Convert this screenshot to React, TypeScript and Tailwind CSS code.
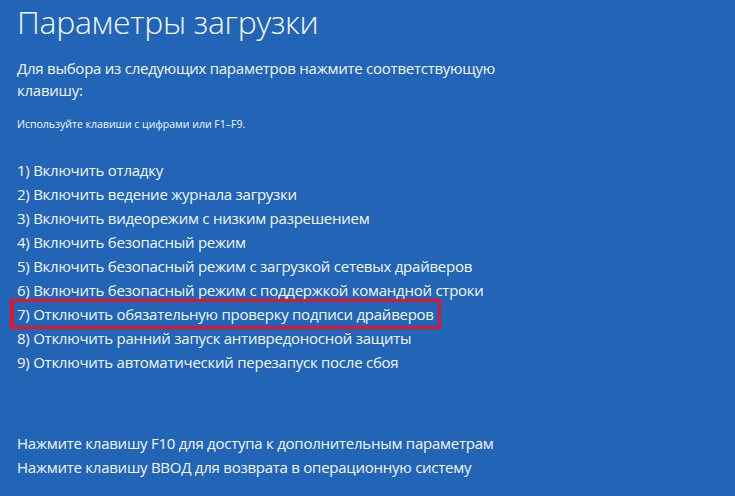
const options = [
  '1) Включить отладку',
  '2) Включить ведение журнала загрузки',
  '3) Включить видеорежим с низким разрешением',
  '4) Включить безопасный режим',
  '5) Включить безопасный режим с загрузкой сетевых драйверов',
  '6) Включить безопасный режим с поддержкой командной строки',
  '7) Отключить обязательную проверку подписи драйверов',
  '8) Отключить ранний запуск антивредоносной защиты',
  '9) Отключить автоматический перезапуск после сбоя',
];

const HIGHLIGHTED = 6;

export default function App() {
  return (
    <div className="w-[735px] h-[496px] bg-[#2264b5] text-[#f4f7fc] font-['Open_Sans',sans-serif] tracking-[-0.25px] flex flex-col pl-[17px] pt-[1px] overflow-hidden">
      <h1 className="text-[32px] font-light leading-[42px] tracking-[-0.3px]">Параметры загрузки</h1>

      <p className="mt-[14px] text-[15px] leading-[22px] w-[500px]">
        Для выбора из следующих параметров нажмите соответствующую клавишу:
      </p>

      <p className="mt-[15px] text-[10.5px] leading-[16px] tracking-normal">Используйте клавиши с цифрами или F1–F9.</p>

      <ul className="mt-[26px] flex flex-col">
        {options.map((item, i) => (
          <li key={item} className="text-[15px] leading-[24px] h-[24px] whitespace-nowrap">
            {i === HIGHLIGHTED ? (
              <span className="inline-flex items-center h-[30px] -ml-[7px] -mt-[3px] pl-[3px] pr-[4px] border-[3px] border-l-[4px] border-[#e2152a]">
                {item}
              </span>
            ) : (
              item
            )}
          </li>
        ))}
      </ul>

      <div className="mt-[57px] flex flex-col">
        <p className="text-[15px] leading-[24px]">Нажмите клавишу F10 для доступа к дополнительным параметрам</p>
        <p className="text-[15px] leading-[24px]">Нажмите клавишу ВВОД для возврата в операционную систему</p>
      </div>
    </div>
  );
}
